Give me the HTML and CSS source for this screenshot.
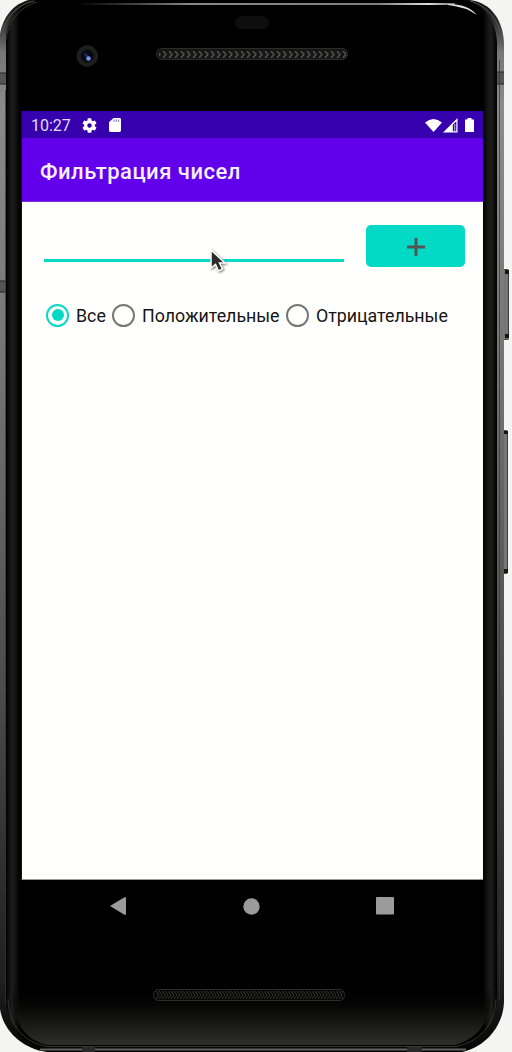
FILE: index.html
```html
<!DOCTYPE html>
<html lang="ru">
<head>
<meta charset="utf-8">
<title>Фильтрация чисел</title>
<link rel="stylesheet" href="styles.css">
</head>
<body>
<div class="stage">
  <svg class="device" width="512" height="1052" viewBox="0 0 512 1052" aria-hidden="true">
    <defs>
      <linearGradient id="metal" x1="0" y1="0" x2="0" y2="1">
        <stop offset="0" stop-color="#0c0c0c"/><stop offset=".02" stop-color="#2d2d2d"/><stop offset=".05" stop-color="#777"/><stop offset=".1" stop-color="#8b8b8b"/><stop offset=".35" stop-color="#747474"/><stop offset=".65" stop-color="#4c4c4c"/><stop offset=".85" stop-color="#2b2b2b"/><stop offset=".93" stop-color="#202020"/><stop offset="1" stop-color="#050505"/>
      </linearGradient>
      <linearGradient id="rim" x1="0" y1="0" x2="1" y2="0">
        <stop offset="0" stop-color="#000"/><stop offset=".012" stop-color="#1d1d1b"/><stop offset=".02" stop-color="#111110"/><stop offset=".028" stop-color="#000"/><stop offset=".972" stop-color="#000"/><stop offset=".98" stop-color="#131312"/><stop offset=".988" stop-color="#1d1d1b"/><stop offset="1" stop-color="#000"/>
      </linearGradient>
      <linearGradient id="chin" x1="0" y1="0" x2="0" y2="1">
        <stop offset="0" stop-color="#000" stop-opacity="0"/><stop offset=".5" stop-color="#111110"/><stop offset="1" stop-color="#2d2d2b"/>
      </linearGradient>
      <linearGradient id="shine" x1="0" y1="0" x2="1" y2="0">
        <stop offset="0" stop-color="#777" stop-opacity="0"/><stop offset=".3" stop-color="#858985"/><stop offset=".8" stop-color="#7d817f"/><stop offset=".93" stop-color="#ddd"/><stop offset="1" stop-color="#777"/>
      </linearGradient>
      <pattern id="mesh" width="6" height="10" patternUnits="userSpaceOnUse" y="50">
        <path d="M1 1l3 3.500-3 3.500" fill="none" stroke="#545452" stroke-width="1.300"/>
      </pattern>
      <pattern id="meshLow" width="6" height="10" patternUnits="userSpaceOnUse" y="990">
        <path d="M0 1l3 4-3 4M3 1l3 4-3 4" fill="none" stroke="#333331" stroke-width="1"/>
      </pattern>
      <clipPath id="body"><path d="M0 34C3 17 13 4 29 0H470C492 3 503 21 504 43V1002C503 1027 485 1047 462 1052H47C22 1049 3 1030 0 1009Z"/></clipPath>
    </defs>
    <g fill="#777" stroke="#3d3d3d">
      <rect x="503.500" y="269.500" width="5" height="70" rx="1"/>
      <rect x="503.500" y="430.500" width="4" height="143" rx="1"/>
    </g>
    <path d="M505 270h4v4h-4zM505 334h4v4h-4zM504 431h4v3h-4zM504 569h4v4h-4z" fill="#151515"/>
    <g clip-path="url(#body)">
      <rect width="512" height="1052" fill="url(#metal)"/>
      <path d="M0 73h6v11H0zM0 281h7v11H0zM497 72h7v12h-7z" fill="#555"/>
      <path d="M0 73h6M0 84h6M0 281h7M0 292h7M497 72h7M497 84h7M497 960h7M497 971h7" stroke="#242424"/>
      <path d="M5.500 90V1005M499.500 60V1000" stroke="#333" stroke-opacity=".7" fill="none"/>
      <path d="M6 35C9 17 20 3 38 0H463C484 4 496 20 497 43V999C496 1027 480 1042 455 1047H46C22 1045 7 1025 6 999Z" fill="url(#rim)"/>
      <path d="M12 988H491Q493 1034 455 1045H48Q12 1038 12 988Z" fill="url(#chin)"/>
      <path d="M2 34C6 17 16 5 34 1M470 1C489 6 501 23 502 44" fill="none" stroke="#555" stroke-width="1"/>
      <path d="M6 40C8 21 20 7 37 2M8 999C9 1026 24 1043 48 1046.500H455C480 1042 495 1025 496 999" fill="none" stroke="#353533"/>
      <path d="M40 1049.500H466" stroke="#626262" stroke-width="2"/>
      <path d="M82 1047h13v5H82zM407 1047h15v5h-15z" fill="#292929"/>
      <path d="M75 3h380v2H75z" fill="url(#shine)"/>
      <path d="M448 4Q468 4 477 15Q466 7 448 5Z" fill="#ddd"/>
    </g>
    <rect x="235" y="16" width="34" height="13" rx="6.500" fill="#0e0e0e"/>
    <circle cx="87.300" cy="56" r="10.700" fill="#1e1e1e"/>
    <circle cx="87.300" cy="56" r="6.500" fill="#090912"/>
    <path d="M83 53l4 1 4 5-3 2z" fill="#1d2362"/>
    <circle cx="88.500" cy="58.500" r="2.200" fill="#7096e6"/>
    <rect x="156.500" y="48.500" width="191" height="11" rx="5" fill="#161616" stroke="#2c2c2a"/>
    <rect x="159" y="51" width="187" height="7" fill="url(#mesh)"/>
    <rect x="153.500" y="989.500" width="191" height="11" rx="5" fill="#070707" stroke="#2c2c2a"/>
    <rect x="156" y="991" width="187" height="8" fill="url(#meshLow)"/>
  </svg>

  <main class="screen">
    <header class="status">
      <span class="clock">10:27</span>
      <svg class="gear" viewBox="2 2 20 20"><path fill="#fff" fill-rule="evenodd" d="M19.140 12.940a7 7 0 0 0 0-1.880l2.030-1.580a.5.5 0 0 0 .12-.61l-1.920-3.320a.5.5 0 0 0-.59-.22l-2.390.96a7 7 0 0 0-1.620-.94l-.36-2.540a.5.500 0 0 0-.48-.41h-3.840a.5.500 0 0 0-.47.41l-.36 2.540a7 7 0 0 0-1.620.94l-2.390-.96a.5.500 0 0 0-.59.220L2.740 8.870a.5.500 0 0 0 .12.610l2.030 1.580a7 7 0 0 0 0 1.880l-2.030 1.580a.5.500 0 0 0-.12.610l1.920 3.320c.12.220.37.290.59.220l2.390-.96a7 7 0 0 0 1.620.940l.36 2.540c.05.240.24.410.48.410h3.840c.24 0 .44-.17.470-.41l.36-2.540a7 7 0 0 0 1.620-.94l2.390.960c.22.080.47 0 .59-.22l1.920-3.320a.5.500 0 0 0-.12-.61zM12 15a3 3 0 1 1 0-6 3 3 0 0 1 0 6z"/></svg>
      <svg class="card" viewBox="4 2 16 20" preserveAspectRatio="none"><path fill="#fff" d="M18 2h-8L4 8v12a2 2 0 0 0 2 2h12a2 2 0 0 0 2-2V4a2 2 0 0 0-2-2z"/><path fill="#8d70cf" d="M10 4h1.500v3.500H10zM13 4h1.500v3.500H13zM16 4h1.500v3.500H16z"/></svg>
      <span class="spacer"></span>
      <svg class="wifi" viewBox="0 0 17 13"><path fill="#fff" d="M0 3.500Q8.500-3.500 17 3.500L8.500 13Z"/></svg>
      <svg class="signal" viewBox="0 0 15 15"><path fill="#fff" fill-rule="evenodd" d="M0 14.500L14.500 0v14.500zM9.800 6.800v6.500h3.500V3.300z"/><path fill="#a18ad8" d="M11 6h1.300v7H11z"/></svg>
      <svg class="battery" viewBox="0 0 9 14"><path fill="#fff" d="M2.500 0h4v1.500H9V14H0V1.500h2.500z"/></svg>
    </header>
    <div class="appbar"><h1 class="title">Фильтрация чисел</h1></div>
    <section class="content">
      <div class="entry">
        <div class="field" role="textbox"></div>
        <button class="add" aria-label="Добавить">
          <svg width="18" height="18" viewBox="0 0 18 18"><path d="M9 0v18M0 9h18" stroke="#505452" stroke-width="3"/></svg>
        </button>
      </div>
      <div class="filters" role="radiogroup">
        <label class="option all"><span class="radio checked"></span><span class="text">Все</span></label>
        <label class="option positive"><span class="radio"></span><span class="text">Положительные</span></label>
        <label class="option"><span class="radio"></span><span class="text">Отрицательные</span></label>
      </div>
    </section>
  </main>
  <nav class="navbar">
    <svg width="16" height="18" viewBox="0 0 16 18"><path d="M0 9L14 .6Q16-.4 16 1v16q0 1.400-2 .4z" fill="#9a9c9a"/></svg>
    <svg width="17" height="17" viewBox="0 0 17 17"><circle cx="8.500" cy="8.500" r="8.200" fill="#9a9c9a"/></svg>
    <svg width="18" height="18" viewBox="0 0 18 18"><rect width="18" height="17.500" rx="1" fill="#9a9c9a"/></svg>
  </nav>
  <svg class="pointer" width="19" height="28" viewBox="0 0 19 28"><path d="M2 2v18l4.500-3.500 3 6.500 4-2-3-6h5.500z" fill="#2c2c2c" stroke="#fff" stroke-width="1.500"/></svg>
</div>
</body>
</html>
```
FILE: styles.css
```css
* { box-sizing: border-box; }
body { margin: 0; background: #f4f4f3; font-family: Roboto, sans-serif; }
.stage { position: relative; width: 512px; height: 1052px; overflow: hidden; padding: 111px 29px 0 21px; }
.device { position: absolute; left: 0; top: 0; }
.screen { position: relative; width: 462px; height: 769px; background: #fffffe; border-bottom: 1px solid #999; border-left: 1px solid #111; }
.status { display: flex; align-items: center; height: 27px; padding: 1px 9px 0 9px; background: #3700ae; }
.clock { width: 40px; padding-top: 2px; color: #e4dcf5; font-size: 16px; line-height: 20px; white-space: nowrap; }
.gear { width: 15px; height: 15px; margin-left: 11px; }
.card { width: 12px; height: 14px; margin-left: 12px; }
.spacer { flex: 1; }
.wifi { width: 17px; height: 13px; }
.signal { width: 15px; height: 15px; margin-left: 1px; }
.battery { width: 9px; height: 14px; margin-left: 7px; }
.appbar { display: flex; align-items: center; height: 64px; padding: 4px 0 0 18px; background: #6200eb; border-bottom: 1px solid #7b30df; }
.title { margin: 0; color: #f6efff; font-size: 22px; font-weight: 500; line-height: 28px; letter-spacing: .5px; white-space: nowrap; }
.content { padding: 23px 17px 0 22px; }
.entry { display: flex; justify-content: space-between; align-items: flex-start; }
.field { width: 300px; height: 37px; border-bottom: 3px solid #04d9c5; }
.add { display: flex; align-items: center; justify-content: center; width: 99px; height: 42px; margin-right: 1px; padding: 1px 0 0; border: 0; border-radius: 5px; background: #03dac5; }
.filters { display: flex; align-items: center; height: 24px; margin-top: 36px; padding-left: 2px; }
.option { display: flex; align-items: center; gap: 7px; }
.all { width: 66px; }
.positive { width: 174px; }
.radio { display: flex; align-items: center; justify-content: center; width: 23px; height: 23px; flex: none; border: 2px solid #777; border-radius: 50%; }
.checked { border-color: #0bd8c6; }
.checked::after { content: ""; width: 12px; height: 12px; border-radius: 50%; background: #03dac5; }
.text { padding-top: 1px; color: #141414; font-size: 17.800px; line-height: 24px; white-space: nowrap; }
.navbar { position: relative; display: flex; justify-content: space-between; align-items: center; height: 52px; padding: 0 89px 0 89px; }
.pointer { position: absolute; left: 209px; top: 248px; filter: drop-shadow(1px 1px 1px #777); }
```
